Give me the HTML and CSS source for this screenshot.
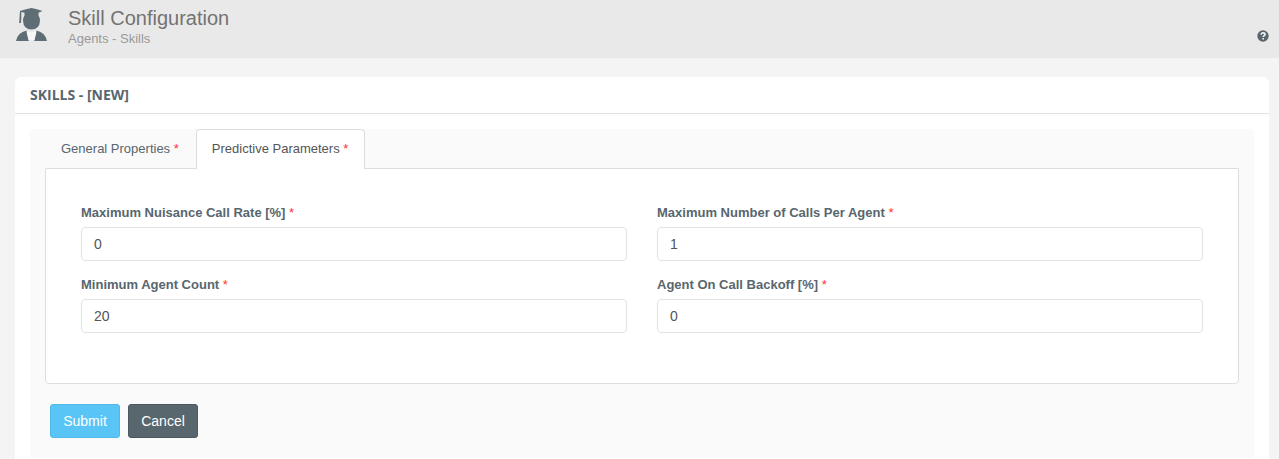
FILE: index.html
```
<!DOCTYPE html>
<html lang="en">
<head>
  <meta charset="UTF-8" />
  <meta name="viewport" content="width=device-width, initial-scale=1.0"/>
  <title>Skill Configuration</title>
  <link rel="stylesheet" href="styles.css">
</head>
<body>
  <header class="page-header">
    <svg class="header-icon" viewBox="0 0 32 34" width="32" height="34" aria-hidden="true">
      <path d="M4 3 Q10 1 15.500 0 Q21 1 26.500 3 L22.500 4.800 V7.500 Q24 9.500 24 12.800 Q23.500 21.500 15.500 21.500 Q7.500 21.500 7 12.800 Q7 9.500 8.500 7.500 V4.800 L5.300 4 V10 L5 15 H3.200 L3.500 10 Z"/>
      <path d="M0 33 Q1.500 24.500 10.500 22.500 L12.800 33 Z M31 33 Q29.500 24.500 20.500 22.500 L18.200 33 Z"/>
      <path class="collar" d="M10.500 23.500 Q15.500 25 20.500 23.500 L18.500 32 H12.500 Z"/>
    </svg>
    <div class="header-text">
      <h1>Skill Configuration</h1>
      <p>Agents - Skills</p>
    </div>
    <a href="#" class="help" aria-label="Help">
      <svg viewBox="0 0 12 12" width="12" height="12" aria-hidden="true">
        <circle cx="6" cy="6" r="5.700"/>
        <path d="M4 4.700 Q4.200 2.900 6 2.900 Q8 2.900 8 4.500 Q8 5.300 6.900 5.900 Q6.200 6.300 6.200 7.100 M6.200 8.100 V9.600"/>
      </svg>
    </a>
  </header>

  <main class="panel">
    <h2 class="panel-heading">SKILLS - [NEW]</h2>
    <form class="panel-body">
      <div class="tabs" role="tablist">
        <button type="button" class="tab" role="tab" aria-selected="false">General Properties <span class="required">*</span></button>
        <button type="button" class="tab active" role="tab" aria-selected="true">Predictive Parameters <span class="required">*</span></button>
      </div>

      <div class="tab-content" role="tabpanel">
        <div class="field">
          <label for="nuisance">Maximum Nuisance Call Rate [%] <span class="required">*</span></label>
          <input type="text" id="nuisance" value="0" />
        </div>
        <div class="field">
          <label for="calls">Maximum Number of Calls Per Agent <span class="required">*</span></label>
          <input type="text" id="calls" value="1" />
        </div>
        <div class="field">
          <label for="agents">Minimum Agent Count <span class="required">*</span></label>
          <input type="text" id="agents" value="20" />
        </div>
        <div class="field">
          <label for="backoff">Agent On Call Backoff [%] <span class="required">*</span></label>
          <input type="text" id="backoff" value="0" />
        </div>
      </div>

      <div class="actions">
        <button type="submit" class="btn btn-submit">Submit</button>
        <button type="button" class="btn btn-cancel">Cancel</button>
      </div>
    </form>
  </main>
</body>
</html>
```
FILE: styles.css
```
* {
  box-sizing: border-box;
}
body {
  display: flex;
  flex-direction: column;
  min-height: 100vh;
  margin: 0;
  font-family: "Liberation Sans", Arial, sans-serif;
  font-size: 13px;
  line-height: 18px;
  color: #58666e;
  background: #f4f4f4;
}
h1, h2, p {
  margin: 0;
  font-weight: normal;
}
button, input {
  font-family: inherit;
}
.page-header {
  display: flex;
  align-items: flex-start;
  padding: 8px 10px 8px 16px;
  background: #e9e9e9;
}
.header-icon {
  fill: #5f6d75;
}
.header-icon .collar {
  fill: #f6f6f6;
}
.header-text {
  margin-left: 20px;
}
.header-text h1 {
  font-size: 20px;
  line-height: 20px;
  color: #737373;
}
.header-text p {
  line-height: 22px;
  color: #999;
}
.help {
  display: flex;
  margin: 22px 0 0 auto;
}
.help circle {
  fill: #58666e;
}
.help path {
  fill: none;
  stroke: #f4f4f4;
  stroke-width: 1.6;
}
.panel {
  flex: 1;
  margin: 19px 10px 0 15px;
  background: #fff;
  border-radius: 6px 6px 0 0;
}
.panel-heading {
  padding: 8px 15px;
  font-family: "Open Sans", sans-serif;
  font-size: 14px;
  line-height: 20px;
  font-weight: bold;
  border-bottom: 1px solid #e1e3e3;
}
.panel-body {
  margin: 15px 15px 0;
  padding: 0 15px 20px;
  background: #fafafa;
  border-radius: 4px;
}
.tabs {
  display: flex;
}
.tab {
  height: 40px;
  padding: 0 16px 2px 15px;
  font-size: 13px;
  color: #58666e;
  background: none;
  border: 1px solid transparent;
  border-bottom: 0;
  border-radius: 4px 4px 0 0;
  cursor: pointer;
}
/* the open tab covers the top border of its content */
.tab.active {
  position: relative;
  z-index: 1;
  color: #555;
  background: #fff;
  border-color: #ddd;
}
.required {
  font-weight: normal;
  color: #f33;
}
.tab-content {
  display: grid;
  grid-template-columns: 1fr 1fr;
  gap: 15px 30px;
  margin-top: -1px;
  padding: 35px 35px 50px;
  background: #fff;
  border: 1px solid #dedede;
  border-radius: 0 0 4px 4px;
}
.field label {
  display: block;
  margin-bottom: 5px;
  line-height: 18px;
  font-weight: bold;
}
.field input {
  display: block;
  width: 100%;
  height: 34px;
  padding: 6px 12px;
  font-size: 14px;
  color: #555;
  background: #fff;
  border: 1px solid #e1e3e3;
  border-radius: 4px;
}
.actions {
  display: flex;
  gap: 8px;
  padding: 20px 5px 0;
}
.btn {
  min-width: 70px;
  height: 34px;
  padding: 0 12px;
  font-size: 14px;
  color: #fff;
  border: 1px solid;
  border-radius: 3px;
  cursor: pointer;
}
.btn-submit {
  background: #59c5f7;
  border-color: #52b8e8;
}
.btn-cancel {
  background: #58666e;
  border-color: #4b585f;
}
```
